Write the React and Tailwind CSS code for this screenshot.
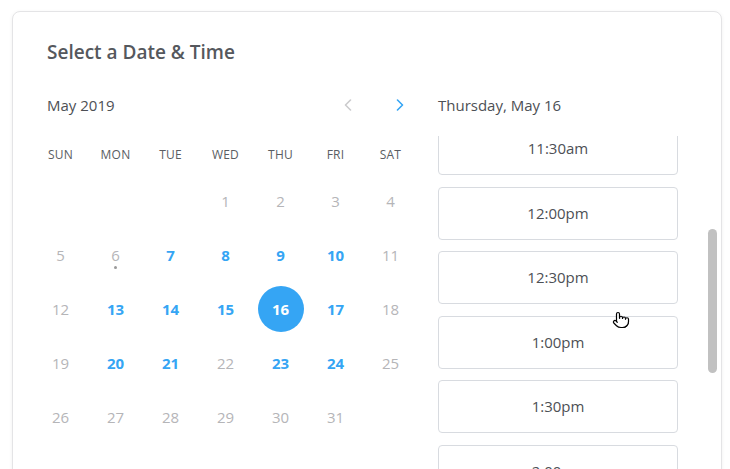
import { Pointer } from "lucide-react";

const DAYS = ["SUN", "MON", "TUE", "WED", "THU", "FRI", "SAT"];

// null = empty cell, "off" = unavailable, "on" = available, "sel" = selected
const CELLS = [
  [null, null],
  [null, null],
  [null, null],
  [1, "off"],
  [2, "off"],
  [3, "off"],
  [4, "off"],
  [5, "off"],
  [6, "today"],
  [7, "on"],
  [8, "on"],
  [9, "on"],
  [10, "on"],
  [11, "off"],
  [12, "off"],
  [13, "on"],
  [14, "on"],
  [15, "on"],
  [16, "sel"],
  [17, "on"],
  [18, "off"],
  [19, "off"],
  [20, "on"],
  [21, "on"],
  [22, "off"],
  [23, "on"],
  [24, "on"],
  [25, "off"],
  [26, "off"],
  [27, "off"],
  [28, "off"],
  [29, "off"],
  [30, "off"],
  [31, "off"],
];

const SLOTS = ["11:30am", "12:00pm", "12:30pm", "1:00pm", "1:30pm", "2:00pm"];

function Chevron({ dir, className }) {
  return (
    <svg width="8" height="12" viewBox="0 0 8 12" className={className}>
      <path
        d={dir === "left" ? "M6.5 1 L1.5 6 L6.5 11" : "M1.5 1 L6.5 6 L1.5 11"}
        fill="none"
        stroke="currentColor"
        strokeWidth="1.6"
        strokeLinecap="round"
        strokeLinejoin="round"
      />
    </svg>
  );
}

function DayCell({ cell }) {
  const [n, kind] = cell;
  if (n === null) return <div className="h-[54px]" />;
  if (kind === "sel") {
    return (
      <div className="flex h-[54px] items-center justify-center">
        <div className="flex h-[46px] w-[46px] items-center justify-center rounded-full bg-[#35a5f4] text-[15px] font-bold text-white">
          {n}
        </div>
      </div>
    );
  }
  return (
    <div className="relative flex h-[54px] items-center justify-center">
      <span
        className={
          kind === "on"
            ? "text-[15px] font-bold text-[#35a5f4]"
            : "text-[15px] text-[#b5b5b8]"
        }
      >
        {n}
      </span>
      {kind === "today" && (
        <span className="absolute top-[38px] h-[3px] w-[3px] rounded-full bg-[#9a9a9a]" />
      )}
    </div>
  );
}

export default function App() {
  return (
    <div
      className="relative h-[469px] w-[730px] overflow-hidden bg-white pl-[12px] pt-[11px] text-[#4d5055]"
      style={{ fontFamily: '"Open Sans", "Liberation Sans", sans-serif' }}
    >
      <div className="h-[520px] w-[710px] rounded-[8px] border border-[#e4e4e6] bg-white pt-[28px] shadow-[0_1px_4px_rgba(0,0,0,0.06)]">
        <h1 className="pl-[34px] text-[19px] font-semibold leading-[24px] text-[#55585d]">
          Select a Date &amp; Time
        </h1>

        <div className="mt-[26px] flex">
          <div className="ml-[20px] w-[385px]">
            <div className="flex h-[30px] items-center pl-[14px]">
              <span className="text-[15px]">May 2019</span>
              <div className="ml-auto mr-[6px] flex items-center gap-[28px]">
                <div className="flex w-[24px] justify-center text-[#cbcbcd]">
                  <Chevron dir="left" />
                </div>
                <div className="flex w-[24px] justify-center text-[#35a5f4]">
                  <Chevron dir="right" />
                </div>
              </div>
            </div>

            <div className="mt-[15px] grid grid-cols-7">
              {DAYS.map((d) => (
                <div
                  key={d}
                  className="flex h-[39px] items-center justify-center text-[12px] tracking-[0.2px] text-[#5a5d62]"
                >
                  {d}
                </div>
              ))}
              {CELLS.map((c, i) => (
                <DayCell key={i} cell={c} />
              ))}
            </div>
          </div>

          <div className="ml-[20px] flex-1">
            <div className="flex h-[30px] items-center text-[15px]">
              Thursday, May 16
            </div>
            <div className="mt-[16px] flex h-[340px] overflow-hidden">
              <div className="-mt-[14px] flex w-[240px] flex-col gap-[11.5px]">
                {SLOTS.map((s) => (
                  <div
                    key={s}
                    className="flex h-[53px] shrink-0 items-center justify-center rounded-[4px] border border-[#d8dbe0] text-[15px] text-[#4d5055]"
                  >
                    {s}
                  </div>
                ))}
              </div>
              <div className="ml-auto mr-[4px] w-[9px]">
                <div className="mt-[93px] h-[144px] rounded-full bg-[#c1c1c1]" />
              </div>
            </div>
          </div>
        </div>
      </div>

      <Pointer
        className="absolute left-[612px] top-[311px] text-black"
        size={18}
        fill="white"
        strokeWidth={1.6}
      />
    </div>
  );
}
